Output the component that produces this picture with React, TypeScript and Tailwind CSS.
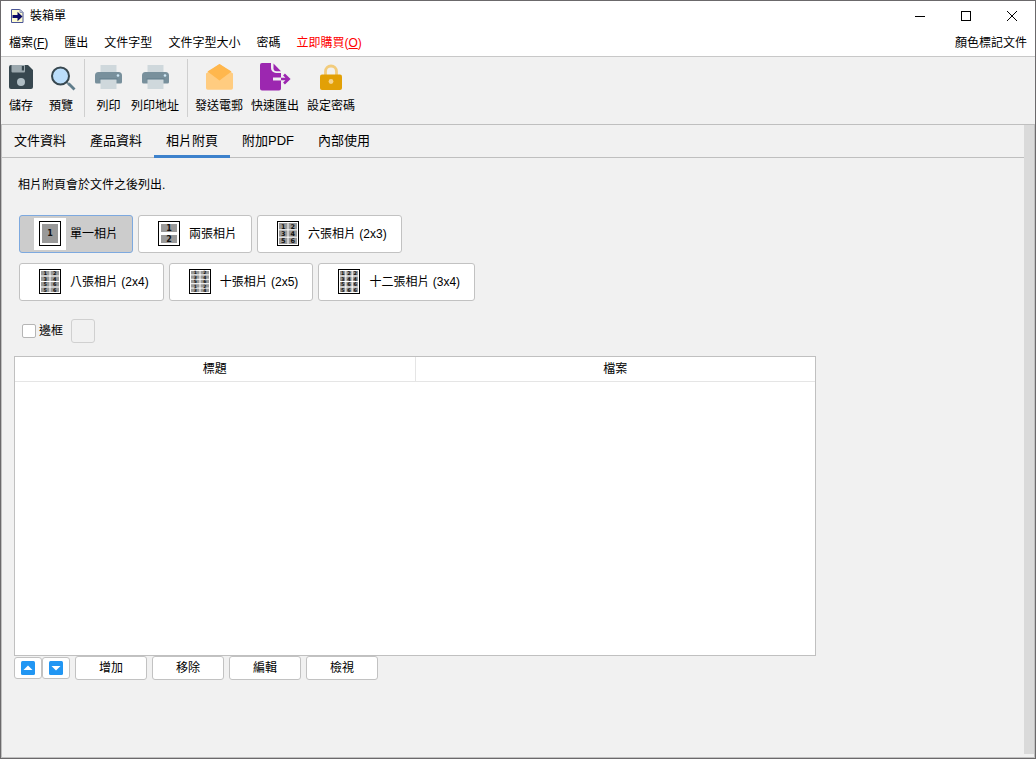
import { useState } from 'react';
import type { ReactNode } from 'react';
import clsx from 'clsx';

const tabs = ['文件資料', '產品資料', '相片附頁', '附加PDF', '內部使用'];
const menus = ['匯出', '文件字型', '文件字型大小', '密碼'];

const layoutRows = [
  [
    { id: '1', label: '單一相片', slots: ['1'] },
    { id: '2', label: '兩張相片', slots: ['1', '2'] },
    { id: '6', label: '六張相片 (2x3)', slots: ['12', '34', '56'] },
  ],
  [
    { id: '8', label: '八張相片 (2x4)', slots: ['12', '34', '56', '56'] },
    { id: '10', label: '十張相片 (2x5)', slots: ['12', '34', '56', '12', '34'] },
    { id: '12', label: '十二張相片 (3x4)', slots: ['122', '344', '566', '566'] },
  ],
];

function AppIcon() {
  return (
    <svg width="14" height="16" viewBox="0 0 14 16" aria-hidden="true">
      <path d="M1.500 1.500h8.500l3 3v10H1.500z" fill="#fdfbd0" stroke="#4a5596" />
      <path d="M10 1.500v3h3z" fill="#dfe3ea" stroke="#8f98b8" />
      <path d="M2.500 7h5V3.800l5 4.700-5 4.700V10h-5z" fill="#0c0c66" />
    </svg>
  );
}

function SaveIcon() {
  return (
    <svg width="24" height="24" viewBox="0 0 24 24" aria-hidden="true">
      <path d="M2 0h17l5 5v17a2 2 0 0 1-2 2H2a2 2 0 0 1-2-2V2a2 2 0 0 1 2-2z" fill="#37474f" />
      <path d="M2.500 0H16v6.500a1 1 0 0 1-1 1H3.500a1 1 0 0 1-1-1z" fill="#9ba8ae" />
      <path d="M12.800 1h2.200v4.500h-2.200z" fill="#37474f" />
      <circle cx="12" cy="17" r="4" fill="#b0bec5" />
    </svg>
  );
}

function PreviewIcon() {
  return (
    <svg width="24" height="24" viewBox="0 0 24 24" className="overflow-visible" aria-hidden="true">
      <path d="M17.500 17l3 3" stroke="#78909c" strokeWidth="2" />
      <path d="M19.500 18.500l6 6" stroke="#607d8b" strokeWidth="2.800" />
      <circle cx="11.500" cy="11" r="8.500" fill="#bbdefb" stroke="#37474f" strokeWidth="2" />
    </svg>
  );
}

function PrintIcon() {
  return (
    <svg width="27" height="24" viewBox="0 0 27 24" aria-hidden="true">
      <path d="M5.500 0h16v8h-16z" fill="#cfd8dc" />
      <path d="M3.500 7h20A3.500 3.500 0 0 1 27 10.500V17a1.500 1.500 0 0 1-1.500 1.500h-24A1.500 1.500 0 0 1 0 17v-6.500A3.500 3.500 0 0 1 3.500 7z" fill="#78909c" />
      <path d="M5.500 14h16v10h-16z" fill="#cfd8dc" />
      <path d="M4.500 14h18" stroke="#607d8b" />
      <circle cx="23" cy="10.500" r="1.300" fill="#cfe9f7" />
    </svg>
  );
}

function MailIcon() {
  return (
    <svg width="27" height="26" viewBox="0 0 27 26" aria-hidden="true">
      <path d="M0 9.500L13.500 0 27 9.500V24a1.800 1.800 0 0 1-1.800 1.800H1.800A1.800 1.800 0 0 1 0 24z" fill="#ffcc80" />
      <path d="M1.500 7.500L13.500 0l12 7.500-12 9z" fill="#ffb74d" />
    </svg>
  );
}

function ExportIcon() {
  return (
    <svg width="31" height="28" viewBox="0 0 31 28" aria-hidden="true">
      <path d="M2 0h9v5a5 5 0 0 0 5 5h5v4.500h-8v3h8v8a2 2 0 0 1-2 2H2a2 2 0 0 1-2-2V2a2 2 0 0 1 2-2z" fill="#9c27b0" />
      <path d="M13.500.5L21 8.200h-4.500a3 3 0 0 1-3-3z" fill="#9c27b0" />
      <path d="M21 16h7M24 11.500l4.700 4.500-4.700 4.500" fill="none" stroke="#9c27b0" strokeWidth="2.600" />
    </svg>
  );
}

function LockIcon() {
  return (
    <svg width="22" height="26" viewBox="0 0 22 26" aria-hidden="true">
      <path d="M5.500 12V7.500a5.500 5.500 0 0 1 11 0V12" fill="none" stroke="#f2cc7d" strokeWidth="2.800" />
      <rect y="10.500" width="22" height="15.500" rx="2" fill="#e2a006" />
      <circle cx="11" cy="17.500" r="2.400" fill="#f5d48e" />
    </svg>
  );
}

// Small page thumbnail with numbered photo slots
function PageIcon({ slots }: { slots: string[] }) {
  const rows = slots.length;
  const cols = slots[0].length;
  const gap = rows === 2 ? 3 : 1;
  const top = rows > 2 ? 5 : 6;
  const left = cols > 1 ? 7 : 8;
  const w = (32 - left * 2 - (cols - 1)) / cols;
  const h = (31 - top * 2 - (rows - 1) * gap) / rows;
  const size = [8, 8, 6.5, 5, 4.5][rows - 1];
  return (
    <svg width="32" height="32" viewBox="0 0 32 32" className="bg-white font-['DejaVu_Sans',sans-serif]" aria-hidden="true">
      <rect x="5.500" y="3.500" width="21" height="24" fill="#fff" stroke="#000" />
      {slots.map((row, r) =>
        row.split('').map((n, c) => {
          const x = left + c * (w + 1);
          const y = top + r * (h + gap);
          return (
            <g key={`${r}-${c}`}>
              <rect x={x} y={y} width={w} height={h} fill="#999" />
              <text x={x + w / 2} y={y + h / 2 + size * 0.37} textAnchor="middle" fontSize={size} fontWeight="700" fill="#111">
                {n}
              </text>
            </g>
          );
        }),
      )}
    </svg>
  );
}

function ToolButton({ label, children }: { label: string; children: ReactNode }) {
  return (
    <button type="button" className="flex flex-col items-center">
      <span className="flex h-8 items-center justify-center">{children}</span>
      <span className="mt-[5px] leading-4">{label}</span>
    </button>
  );
}

function ArrowBox({ down = false }: { down?: boolean }) {
  return (
    <svg width="14" height="14" viewBox="0 0 14 14" aria-hidden="true">
      <rect width="14" height="14" rx="1.500" fill="#2196f3" />
      <path d={down ? 'M2.500 5h9L7 9.500z' : 'M2.500 9h9L7 4.500z'} fill="#fff" />
    </svg>
  );
}

export default function App() {
  const [tab, setTab] = useState('相片附頁');
  const [layout, setLayout] = useState('1');
  const [border, setBorder] = useState(false);

  return (
    <div className="flex min-h-screen flex-col border border-[#6b696b] bg-[#f1f1f1] font-['Liberation_Sans','Noto_Sans_CJK_TC',sans-serif] text-xs text-black">
      <header className="border-b border-[#c8c8c8] bg-white">
        <div className="flex h-[29px] items-center justify-between">
          <h1 className="flex items-center gap-[6px] pl-[9px]">
            <AppIcon />
            裝箱單
          </h1>
          <div className="flex">
            <button type="button" aria-label="最小化" className="flex h-7 w-[46px] items-center justify-center">
              <svg width="10" height="10" viewBox="0 0 10 10" shapeRendering="crispEdges"><path d="M0 5.500h10" stroke="#000" /></svg>
            </button>
            <button type="button" aria-label="最大化" className="flex h-7 w-[46px] items-center justify-center">
              <svg width="10" height="10" viewBox="0 0 10 10" shapeRendering="crispEdges"><path d="M.5.5h9v9h-9z" fill="none" stroke="#000" /></svg>
            </button>
            <button type="button" aria-label="關閉" className="flex h-7 w-[46px] items-center justify-center">
              <svg width="10" height="10" viewBox="0 0 10 10"><path d="M0 0l10 10M10 0L0 10" stroke="#000" /></svg>
            </button>
          </div>
        </div>
        <nav className="flex h-[26px] items-center gap-4 px-2">
          <button type="button">檔案(<u>F</u>)</button>
          {menus.map((m) => (
            <button key={m} type="button">{m}</button>
          ))}
          <button type="button" className="text-[#ff0000]">立即購買(<u>O</u>)</button>
          <button type="button" className="ml-auto">顏色標記文件</button>
        </nav>
      </header>

      <div className="flex h-[68px] items-start border-b border-[#bfbfbf] pl-2">
        <div className="flex gap-4 pt-1">
          <ToolButton label="儲存"><SaveIcon /></ToolButton>
          <ToolButton label="預覽"><PreviewIcon /></ToolButton>
        </div>
        <div className="mt-[2px] mr-[10px] ml-[11px] h-[58px] w-px bg-[#cfcfcf]" />
        <div className="flex gap-[9px] pt-1">
          <ToolButton label="列印"><PrintIcon /></ToolButton>
          <ToolButton label="列印地址"><PrintIcon /></ToolButton>
        </div>
        <div className="mt-[2px] mr-[7px] ml-2 h-[58px] w-px bg-[#cfcfcf]" />
        <div className="flex gap-2 pt-1">
          <ToolButton label="發送電郵"><MailIcon /></ToolButton>
          <ToolButton label="快速匯出"><ExportIcon /></ToolButton>
          <ToolButton label="設定密碼"><LockIcon /></ToolButton>
        </div>
      </div>

      <div className="flex flex-1 border-x border-b border-[#c0c0c0]">
        <main className="flex-1">
          <div role="tablist" className="flex h-[33px] border-b border-[#bfbfbf] text-[13px]">
            {tabs.map((t) => (
              <button
                key={t}
                type="button"
                role="tab"
                aria-selected={tab === t}
                onClick={() => setTab(t)}
                className={clsx('h-[33px] border-b-3 px-3 pt-[2px]', tab === t ? 'border-[#3d82cc]' : 'border-transparent')}
              >
                {t}
              </button>
            ))}
          </div>

          <section className="px-3">
            <p className="px-1 pt-[19px] leading-4">相片附頁會於文件之後列出.</p>

            <div className="mt-[22px] flex flex-col gap-[10px] px-[5px]">
              {layoutRows.map((row, i) => (
                <div key={i} className="flex flex-wrap gap-[5px]">
                  {row.map((item) => (
                    <button
                      key={item.id}
                      type="button"
                      aria-pressed={layout === item.id}
                      onClick={() => setLayout(item.id)}
                      className={clsx(
                        'flex h-[38px] items-center gap-1 rounded-[3px] border px-[14px]',
                        layout === item.id ? 'border-[#7da9df] bg-[#cccccc]' : 'border-[#c2c2c2] bg-white',
                      )}
                    >
                      <PageIcon slots={item.slots} />
                      {item.label}
                    </button>
                  ))}
                </div>
              ))}
            </div>

            <div className="mt-[18px] flex items-center gap-2 px-2">
              <label className="flex items-center gap-[3px]">
                <input
                  type="checkbox"
                  checked={border}
                  onChange={(e) => setBorder(e.target.checked)}
                  className="size-[14px] appearance-none rounded-[2px] border border-[#b5b5b5] bg-white checked:bg-[#3d82cc]"
                />
                邊框
              </label>
              <button type="button" aria-label="邊框顏色" disabled={!border} className="size-6 rounded-[3px] border border-[#d0d0d0]" />
            </div>

            <div className="mt-[13px] h-[300px] max-w-[802px] border border-[#c0c0c0] bg-white">
              <table className="w-full table-fixed">
                <thead>
                  <tr className="h-6 border-b border-[#e5e5e5]">
                    <th className="border-r border-[#e5e5e5] p-0 font-normal">標題</th>
                    <th className="p-0 font-normal">檔案</th>
                  </tr>
                </thead>
                <tbody />
              </table>
            </div>

            <div className="flex items-center gap-[5px]">
              <div className="flex">
                <button type="button" aria-label="上移" className="flex h-[22px] w-7 items-center justify-center rounded-[3px] border border-[#c2c2c2] bg-white">
                  <ArrowBox />
                </button>
                <button type="button" aria-label="下移" className="flex h-[22px] w-7 items-center justify-center rounded-[3px] border border-[#c2c2c2] bg-white">
                  <ArrowBox down />
                </button>
              </div>
              {['增加', '移除', '編輯', '檢視'].map((label) => (
                <button key={label} type="button" className="h-6 w-[72px] rounded-[3px] border border-[#c2c2c2] bg-white">
                  {label}
                </button>
              ))}
            </div>
          </section>
        </main>
        <div className="mb-[3px] w-[10px] bg-[#dadada]" />
      </div>
    </div>
  );
}
